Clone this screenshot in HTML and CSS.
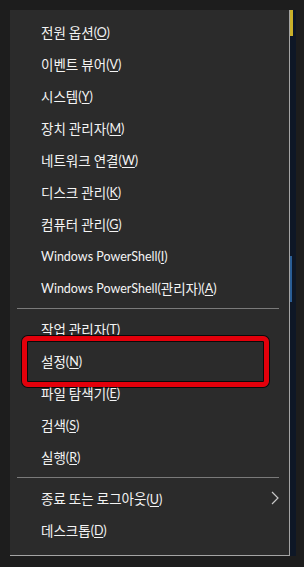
FILE: index.html
```html
<html>

<head>
    <meta name="viewport" content="width=device-width, initial-scale=1.0">
    <title>Win+X 메뉴</title>
    <link rel="stylesheet" href="styles.css">
</head>

<body>
    <div class="screen">
        <div class="menu">
            <div class="item">전원 옵션<span class="key">(<u>O</u>)</span></div>
            <div class="item">이벤트 뷰어<span class="key">(<u>V</u>)</span></div>
            <div class="item">시스템<span class="key">(<u>Y</u>)</span></div>
            <div class="item">장치 관리자<span class="key">(<u>M</u>)</span></div>
            <div class="item">네트워크 연결<span class="key">(<u>W</u>)</span></div>
            <div class="item">디스크 관리<span class="key">(<u>K</u>)</span></div>
            <div class="item">컴퓨터 관리<span class="key">(<u>G</u>)</span></div>
            <div class="item"><span class="latin">Windows PowerShell(<u>I</u>)</span></div>
            <div class="item"><span class="latin">Windows PowerShell(</span>관리자<span class="key">)(<u>A</u>)</span></div>
            <div class="separator"></div>
            <div class="item">작업 관리자<span class="key">(<u>T</u>)</span></div>
            <div class="item">설정<span class="key">(<u>N</u>)</span><span class="highlight"></span></div>
            <div class="item">파일 탐색기<span class="key">(<u>E</u>)</span></div>
            <div class="item">검색<span class="key">(<u>S</u>)</span></div>
            <div class="item">실행<span class="key">(<u>R</u>)</span></div>
            <div class="separator"></div>
            <div class="item submenu">
                <span>종료 또는 로그아웃<span class="key">(<u>U</u>)</span></span>
                <svg class="chevron" width="8" height="14" viewBox="0 0 8 14">
                    <polyline points="1,1 7,7 1,13" fill="none" stroke="#c8c8c8" stroke-width="1.2" />
                </svg>
            </div>
            <div class="item">데스크톱<span class="key">(<u>D</u>)</span></div>
        </div>
        <div class="taskbar">
            <div class="taskbar-accent"></div>
            <div class="taskbar-blue"></div>
        </div>
    </div>
</body>

</html>
```
FILE: styles.css
```css
body {
    margin: 0;
    padding: 0;
    background-color: #1d1d1d;
    width: 304px;
    height: 567px;
    overflow: hidden;
}

.screen {
    display: flex;
    flex-flow: row nowrap;
    padding: 10px 0 0 10px;
}

.menu {
    width: 280px;
    height: 546px;
    box-sizing: border-box;
    padding: 6px 0 10px 0;
    background-color: #2b2b2b;
    border-right: 1px solid #a4a4a4;
    border-bottom: 1px solid #a4a4a4;
    font-family: "Noto Sans CJK KR", "Noto Sans", sans-serif;
    font-size: 13.5px;
    color: #f4f4f4;
}

.item {
    position: relative;
    display: flex;
    align-items: center;
    height: 32px;
    padding-left: 31px;
    white-space: nowrap;
}

.key,
.latin {
    font-family: Lato, "Noto Sans CJK KR", sans-serif;
    font-size: 12.5px;
}

.item u {
    text-decoration-thickness: 1px;
    text-underline-offset: 2px;
}

.submenu {
    justify-content: space-between;
    padding-right: 10px;
}

.chevron {
    display: block;
}

.separator {
    height: 1px;
    margin: 4px 10px 4px 7px;
    background-color: #7a7a7a;
}

.highlight {
    position: absolute;
    left: 12px;
    top: -9px;
    width: 247px;
    height: 51px;
    box-sizing: border-box;
    border: 5px solid #e3000b;
    border-radius: 6px;
    box-shadow: 0 0 0 1px #0a0a0a, inset 0 0 0 1px #0a0a0a;
}

.taskbar {
    width: 6px;
    height: 546px;
    display: flex;
    flex-flow: column nowrap;
    background-color: #0e1726;
}

.taskbar-accent {
    width: 3px;
    height: 26px;
    background-color: #c9b02a;
}

.taskbar-blue {
    width: 2px;
    height: 46px;
    margin-top: 220px;
    background-color: #2a5d94;
}
```
